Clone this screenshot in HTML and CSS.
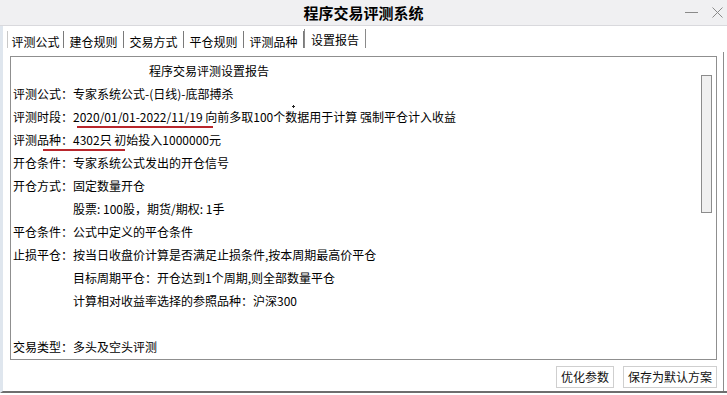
FILE: index.html
```html
<!DOCTYPE html>
<html lang="zh-CN">
<head>
  <meta charset="UTF-8" />
  <title>程序交易评测系统</title>
  <link rel="stylesheet" href="styles.css">
</head>
<body>

  <div class="titlebar">
    <span></span>
    <span class="title">程序交易评测系统</span>
    <div class="win-btns">
      <span class="min"></span>
      <svg class="close" width="11" height="11" viewBox="0 0 11 11">
        <line x1="0.5" y1="0.5" x2="10.5" y2="10.5" />
        <line x1="10.5" y1="0.5" x2="0.5" y2="10.5" />
      </svg>
    </div>
  </div>

  <div class="window-body">
    <ul class="tabs">
      <li class="tab">评测公式</li>
      <li class="tab">建仓规则</li>
      <li class="tab">交易方式</li>
      <li class="tab">平仓规则</li>
      <li class="tab">评测品种</li>
      <li class="tab active">设置报告</li>
    </ul>

    <div class="page">
      <div class="report">
        <div class="report-text">
          <p class="report-title">程序交易评测设置报告</p>
          <p>评测公式：专家系统公式-(日线)-底部搏杀</p>
          <p>评测时段：2020/01/01-2022/11/19 向前多取100个数据用于计算 强制平仓计入收益</p>
          <p>评测品种：4302只 初始投入1000000元</p>
          <p>开仓条件：专家系统公式发出的开仓信号</p>
          <p>开仓方式：固定数量开仓</p>
          <p class="indent">股票: 100股，期货/期权: 1手</p>
          <p>平仓条件：公式中定义的平仓条件</p>
          <p>止损平仓：按当日收盘价计算是否满足止损条件,按本周期最高价平仓</p>
          <p class="indent">目标周期平仓：开仓达到1个周期,则全部数量平仓</p>
          <p class="indent">计算相对收益率选择的参照品种：沪深300</p>
          <p></p>
          <p>交易类型：多头及空头评测</p>

          <span class="mark mark-date"></span>
          <span class="mark mark-count"></span>
          <span class="cursor"></span>
        </div>
        <div class="scrollbar">
          <div class="thumb"></div>
        </div>
      </div>

      <div class="actions">
        <button>优化参数</button>
        <button>保存为默认方案</button>
      </div>
    </div>
  </div>

</body>
</html>
```

FILE: styles.css
```css
html, body {
  margin: 0;
  padding: 0;
}
body {
  width: 727px;
  height: 395px;
  overflow: hidden;
  background: #fff;
  font-family: "Noto Sans CJK SC", "Microsoft YaHei", sans-serif;
  font-size: 12px;
  color: #000;
}
.titlebar {
  height: 25px;
  background: #f0f0f2;
  border-bottom: 1px solid #d9d9dd;
  display: grid;
  grid-template-columns: 1fr auto 1fr;
  align-items: center;
}
.title {
  font-size: 15px;
  font-weight: bold;
  line-height: 25px;
}
.win-btns {
  display: flex;
  justify-content: flex-end;
  align-items: center;
  gap: 14px;
  padding-right: 4px;
}
.min {
  display: block;
  width: 13px;
  height: 1px;
  background: #8a8a8a;
}
.close line {
  stroke: #8a8a8a;
  stroke-width: 1;
}
.window-body {
  height: 365px;
  border-left: 3px solid #dfe6ee;
  border-bottom: 2px solid #6e6e6e;
}
.tabs {
  list-style: none;
  margin: 0 0 4px;
  padding: 0 0 0 4px;
  height: 22px;
  display: flex;
  align-items: flex-end;
}
.tab {
  width: 59px;
  height: 14px;
  padding-top: 3px;
  line-height: 15px;
  text-align: center;
  border-right: 1px solid #7a7a7a;
}
.tab:first-child {
  width: 55px;
  border-left: 1px solid #c8c8c8;
}
.tab.active {
  width: 60px;
  height: 16px;
  border-left: 1px solid #8a8a8a;
  border-right-color: #8a8a8a;
}
.page {
  height: 332px;
  margin-right: 3px;
  padding: 4px 6px 3px 7px;
  border-right: 1px solid #8c8c8c;
}
.report {
  display: flex;
  box-sizing: border-box;
  height: 304px;
  border: 1px solid #8f8f8f;
}
.report-text {
  flex: 1;
  position: relative;
  padding: 2px 0 0 2px;
  line-height: 23px;
}
.report-text p {
  margin: 0;
  height: 23px;
  white-space: nowrap;
}
.report-title {
  padding-left: 136px;
}
.report-text .indent {
  padding-left: 60px;
}
.mark {
  position: absolute;
  height: 2px;
  background: #b8262c;
}
.mark-date {
  left: 66px;
  top: 69px;
  width: 136px;
}
.mark-count {
  left: 32px;
  top: 92px;
  width: 82px;
}
.cursor {
  position: absolute;
  left: 281px;
  top: 48px;
  width: 3px;
  height: 3px;
  background:
    linear-gradient(#222, #222) center / 3px 1px no-repeat,
    linear-gradient(#222, #222) center / 1px 3px no-repeat;
}
.scrollbar {
  padding: 18px 4px 0 0;
}
.thumb {
  width: 9px;
  height: 136px;
  border: 1px solid #8c8c8c;
  background: #f0f0f0;
}
.actions {
  display: flex;
  justify-content: flex-end;
  gap: 9px;
  margin-top: 6px;
}
.actions button {
  height: 22px;
  padding: 0 4px;
  border: 1px solid #cfcfcf;
  background: #fff;
  font-family: inherit;
  font-size: 12px;
  line-height: 20px;
  color: #111;
}
```
